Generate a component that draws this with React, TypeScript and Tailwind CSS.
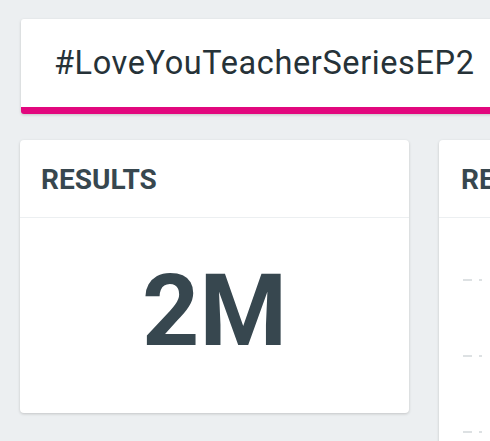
import React from "react";

export default function App() {
  const font = { fontFamily: "Roboto, 'Noto Sans', sans-serif" };
  return (
    <div className="w-[490px] h-[441px] overflow-hidden bg-[#eceff1]" style={font}>
      <div className="pl-[21px] pt-[19px]">
        <div className="w-[520px] h-[95px] bg-white rounded-[3px] border-b-[7px] border-[#e2077e] shadow-[0_1px_3px_rgba(0,0,0,0.18)] flex items-center pl-[33px]">
          <span className="text-[32.5px] text-[#263238] tracking-[0.6px] leading-none whitespace-nowrap">
            #LoveYouTeacherSeriesEP2
          </span>
        </div>
      </div>
      <div className="flex gap-[30px] pl-[20px] pt-[26px]">
        <div className="w-[389px] h-[273px] shrink-0 bg-white rounded-[4px] shadow-[0_1px_3px_rgba(0,0,0,0.18)] flex flex-col">
          <div className="h-[78px] border-b border-[#eceff1] flex items-center pl-[21px] pt-[3px]">
            <span className="text-[28px] font-bold text-[#37474f] leading-none">RESULTS</span>
          </div>
          <div className="flex-1 flex items-center justify-center pb-[10px]">
            <span className="text-[100px] font-bold text-[#37474f] leading-none">2M</span>
          </div>
        </div>
        <div className="w-[389px] h-[320px] shrink-0 bg-white rounded-[4px] shadow-[0_1px_3px_rgba(0,0,0,0.18)] flex flex-col">
          <div className="h-[78px] border-b border-[#eceff1] flex items-center pl-[22px] pt-[3px]">
            <span className="text-[28px] font-bold text-[#37474f] leading-none whitespace-nowrap">RESULTS</span>
          </div>
          <div className="flex flex-col gap-[74px] pt-[61px] pl-[24px]">
            {[0, 1, 2].map((i) => (
              <div key={i} className="flex items-center gap-[7px]">
                <div className="w-[9px] h-[2px] bg-[#dde1e3]" />
                <div className="w-[3px] h-[2px] bg-[#dde1e3]" />
              </div>
            ))}
          </div>
        </div>
      </div>
    </div>
  );
}
